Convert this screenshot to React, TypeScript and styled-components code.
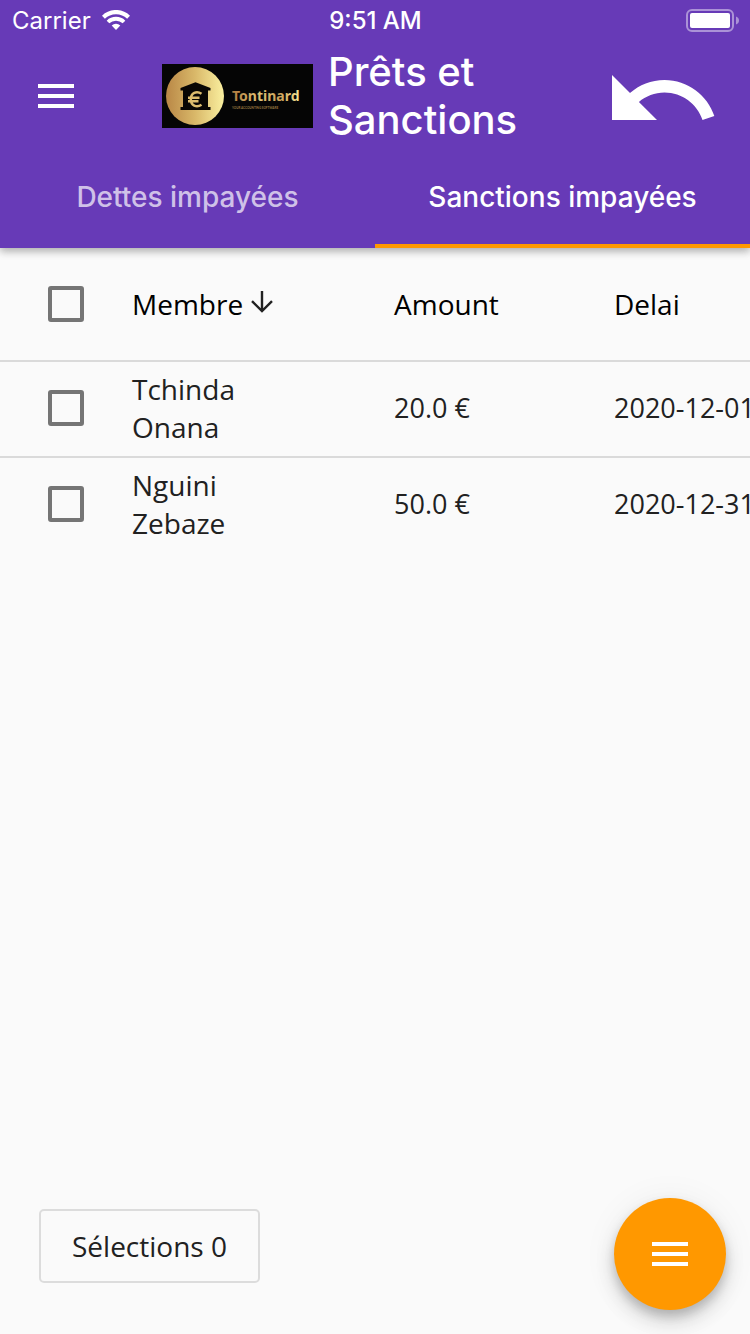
import React, { useState } from "react";
import styled, { createGlobalStyle } from "styled-components";

const GlobalStyle = createGlobalStyle`
  * { box-sizing: border-box; }
  body {
    margin: 0;
    background: #fafafa;
    color: #212121;
    font-family: "Open Sans", "Noto Sans", sans-serif;
    font-size: 28px;
  }
  button { font: inherit; border: 0; padding: 0; background: none; cursor: pointer; }
`;

const Screen = styled.div`
  display: flex;
  flex-direction: column;
  min-height: 100vh;
`;

const Header = styled.header`
  background: #673ab7;
  color: #fff;
  font-family: Inter, sans-serif;
  box-shadow: 0 2px 8px rgba(0, 0, 0, 0.16), 0 4px 8px rgba(0, 0, 0, 0.18);
`;

const StatusBar = styled.div`
  display: grid;
  grid-template-columns: 1fr auto 1fr;
  align-items: center;
  height: 40px;
  padding: 0 11px 0 12px;
  font-size: 24px;
`;

const Carrier = styled.span`
  display: flex;
  align-items: center;
  gap: 11px;
`;

const Clock = styled.span`
  font-weight: 500;
`;

const Battery = styled.svg`
  justify-self: end;
`;

const Toolbar = styled.div`
  display: flex;
  align-items: center;
  height: 112px;
  padding-right: 28px;
`;

const MenuButton = styled.button`
  display: grid;
  place-items: center;
  width: 112px;
  height: 112px;
  margin-right: 50px;
  color: inherit;
`;

const BackButton = styled.button`
  display: grid;
  place-items: center;
  height: 112px;
  color: inherit;
`;

const Title = styled.h1`
  flex: 1;
  margin: 0 0 0 15px;
  font-size: 40px;
  font-weight: 500;
  line-height: 48px;
`;

const Tabs = styled.div`
  display: flex;
`;

const Tab = styled.button<{ $active: boolean }>`
  && {
    flex: 1;
    height: 96px;
    padding-bottom: 2px;
    border-bottom: 4px solid ${(p) => (p.$active ? "#ff9800" : "transparent")};
    color: ${(p) => (p.$active ? "#fff" : "rgba(255, 255, 255, 0.7)")};
    font-size: 28px;
    font-weight: 500;
  }
`;

const TableScroller = styled.main`
  flex: 1;
  overflow-x: auto;
  scrollbar-width: none;
`;

const Table = styled.table`
  width: 820px;
  min-width: 100%;
  table-layout: fixed;
  border-spacing: 0;
`;

const CheckColumn = styled.col`
  width: 132px;
`;
const MemberColumn = styled.col`
  width: 262px;
`;
const AmountColumn = styled.col`
  width: 220px;
`;

const HeadCell = styled.th`
  height: 112px;
  padding: 0;
  color: #000;
  font-weight: 400;
  text-align: left;
`;

const Cell = styled.td`
  height: 96px;
  padding: 0 0 2px;
  border-top: 2px solid #dadada;
  line-height: 38px;
  white-space: nowrap;
`;

const MemberCell = styled(Cell)`
  padding-right: 112px;
  white-space: normal;
`;

const FigureCell = styled(Cell)`
  font-size: 27px;
`;

const SortButton = styled.button`
  display: flex;
  align-items: center;
  gap: 8px;
  color: inherit;
  svg { margin-bottom: 5px; }
`;

const Checkbox = styled.input`
  appearance: none;
  display: block;
  width: 36px;
  height: 36px;
  margin: 0 0 0 48px;
  border: 4px solid #757575;
  border-radius: 3px;
  &:checked { background: #673ab7; border-color: #673ab7; }
`;

const Footer = styled.footer`
  display: flex;
  align-items: center;
  justify-content: space-between;
  padding: 24px 24px 24px 39px;
`;

const SelectionButton = styled.button`
  && {
    height: 74px;
    margin-bottom: 16px;
    padding: 0 31px;
    border: 2px solid #dcdcdc;
    border-radius: 5px;
    color: #212121;
  }
`;

const FloatingButton = styled.button`
  display: grid;
  place-items: center;
  width: 112px;
  height: 112px;
  border-radius: 50%;
  && { background: #ff9800; }
  color: #fff;
  box-shadow: 0 6px 10px rgba(0, 0, 0, 0.16), 0 12px 20px rgba(0, 0, 0, 0.14),
    0 2px 36px rgba(0, 0, 0, 0.06);
`;

function MenuIcon() {
  return (
    <svg width="36" height="24" viewBox="0 0 36 24" fill="currentColor" aria-hidden="true">
      <path d="M0 0h36v4H0zM0 10h36v4H0zM0 20h36v4H0z" />
    </svg>
  );
}

function UndoIcon() {
  return (
    <svg width="120" height="100" viewBox="0 1.2 24 20" fill="currentColor" aria-hidden="true">
      <path d="M12.5 8c-2.65 0-5.05.99-6.9 2.6L2 7v9h9l-3.62-3.62c1.39-1.16 3.16-1.88 5.12-1.88 3.54 0 6.55 2.31 7.6 5.5l2.37-.78C21.08 11.03 17.15 8 12.5 8z" />
    </svg>
  );
}

function WifiIcon() {
  return (
    <svg width="28" height="20" viewBox="0 0 28 20" fill="none" stroke="#fff" aria-hidden="true">
      <path d="M1.4 7.2a18 18 0 0 1 25.2 0" strokeWidth="4.2" />
      <path d="M6 12a11.5 11.5 0 0 1 16 0" strokeWidth="3.8" />
      <path d="M14 20l-4.3-4.4a6.2 6.2 0 0 1 8.6 0z" fill="#fff" stroke="none" />
    </svg>
  );
}

function ArrowDownIcon() {
  return (
    <svg width="22" height="22" viewBox="0 0 22 22" fill="none" stroke="#212121" strokeWidth="2.4" aria-hidden="true">
      <path d="M11 0v19M1 10.200L11 20l10-9.800" />
    </svg>
  );
}

function Logo() {
  return (
    <svg width="151" height="64" viewBox="0 0 151 64" role="img" aria-label="Tontinard">
      <defs>
        <linearGradient id="disc" x1="0" x2="1" y1="0" y2="0">
          <stop offset="0" stopColor="#b98746" />
          <stop offset="0.5" stopColor="#d9b869" />
          <stop offset="1" stopColor="#faf0a0" />
        </linearGradient>
        <linearGradient id="word" x1="0" x2="1" y1="0" y2="0">
          <stop offset="0" stopColor="#b07a3e" />
          <stop offset="0.4" stopColor="#e0c377" />
          <stop offset="0.7" stopColor="#c99f58" />
          <stop offset="1" stopColor="#f5e795" />
        </linearGradient>
      </defs>
      <rect width="151" height="64" fill="#050505" />
      <circle cx="33" cy="32" r="29" fill="url(#disc)" />
      <path
        d="M33.500 18.300L48.500 24v2.500H46v16.500h2.500v3h-30v-3H21V26.500h-2.500V24z"
        fill="#080604"
      />
      <path
        d="M39.500 29.800C34.500 26.400 28.800 29 28.800 35.300S34.500 44.200 39.500 40.800M26 33.700h11.500M26 37.200h10.500"
        fill="none"
        stroke="#dcbc6e"
        strokeWidth="2.5"
      />
      <text x="70" y="37" fill="url(#word)" fontFamily="Noto Sans, sans-serif" fontSize="14" fontWeight="700">
        Tontinard
      </text>
      <text x="70" y="45" fill="#9c7b40" fontFamily="Lato, sans-serif" fontSize="3" fontWeight="700">
        YOUR ACCOUNTING SOFTWARE
      </text>
    </svg>
  );
}

const tabs = ["Dettes impayées", "Sanctions impayées"];

const sanctions = [
  { member: "Tchinda Onana", amount: "20.0 €", due: "2020-12-01" },
  { member: "Nguini Zebaze", amount: "50.0 €", due: "2020-12-31" },
];

export default function App() {
  const [activeTab, setActiveTab] = useState(1);
  const [selected, setSelected] = useState<string[]>([]);

  const toggle = (member: string) =>
    setSelected((list) =>
      list.includes(member) ? list.filter((m) => m !== member) : [...list, member]
    );
  const allSelected = selected.length === sanctions.length;

  return (
    <Screen>
      <GlobalStyle />
      <Header>
        <StatusBar>
          <Carrier>
            Carrier
            <WifiIcon />
          </Carrier>
          <Clock>9:51 AM</Clock>
          <Battery width="53" height="23" viewBox="0 0 53 23" aria-hidden="true">
            <rect x="1" y="1" width="46" height="21" rx="5" fill="none" stroke="#fff" strokeOpacity="0.45" strokeWidth="2" />
            <rect x="4" y="4" width="40" height="15" rx="2" fill="#fff" />
            <path d="M50 7.5q3 1.200 3 4t-3 4z" fill="#fff" fillOpacity="0.45" />
          </Battery>
        </StatusBar>
        <Toolbar>
          <MenuButton aria-label="Menu">
            <MenuIcon />
          </MenuButton>
          <Logo />
          <Title>Prêts et Sanctions</Title>
          <BackButton aria-label="Retour">
            <UndoIcon />
          </BackButton>
        </Toolbar>
        <Tabs role="tablist">
          {tabs.map((label, i) => (
            <Tab
              key={label}
              role="tab"
              aria-selected={i === activeTab}
              $active={i === activeTab}
              onClick={() => setActiveTab(i)}
            >
              {label}
            </Tab>
          ))}
        </Tabs>
      </Header>
      <TableScroller>
        <Table>
          <colgroup>
            <CheckColumn />
            <MemberColumn />
            <AmountColumn />
            <col />
          </colgroup>
          <thead>
            <tr>
              <HeadCell>
                <Checkbox
                  type="checkbox"
                  aria-label="Tout sélectionner"
                  checked={allSelected}
                  onChange={() => setSelected(allSelected ? [] : sanctions.map((s) => s.member))}
                />
              </HeadCell>
              <HeadCell>
                <SortButton>
                  Membre
                  <ArrowDownIcon />
                </SortButton>
              </HeadCell>
              <HeadCell>Amount</HeadCell>
              <HeadCell>Delai</HeadCell>
            </tr>
          </thead>
          <tbody>
            {sanctions.map((s) => (
              <tr key={s.member}>
                <Cell>
                  <Checkbox
                    type="checkbox"
                    aria-label={s.member}
                    checked={selected.includes(s.member)}
                    onChange={() => toggle(s.member)}
                  />
                </Cell>
                <MemberCell>{s.member}</MemberCell>
                <FigureCell>{s.amount}</FigureCell>
                <FigureCell>{s.due}</FigureCell>
              </tr>
            ))}
          </tbody>
        </Table>
      </TableScroller>
      <Footer>
        <SelectionButton>Sélections {selected.length}</SelectionButton>
        <FloatingButton aria-label="Actions">
          <MenuIcon />
        </FloatingButton>
      </Footer>
    </Screen>
  );
}
